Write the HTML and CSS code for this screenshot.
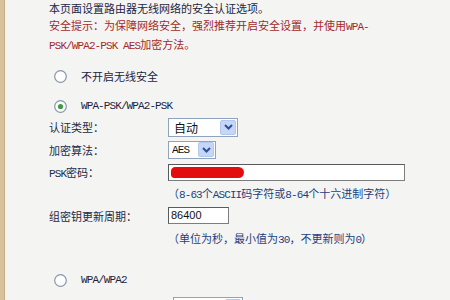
FILE: index.html
```html
<!DOCTYPE html>
<html lang="zh-CN">
<head>
    <meta charset="UTF-8">
    <title>无线网络安全设置</title>
    <link rel="stylesheet" href="styles.css">
</head>
<body>
    <div class="page">
        <div class="intro">
            本页面设置路由器无线网络的安全认证选项。<br>
            <span class="warn">安全提示：为保障网络安全，强烈推荐开启安全设置，并使用<span class="en">WPA-</span><br><span class="en">PSK/WPA2-PSK AES</span>加密方法。</span>
        </div>

        <div class="radio-row first">
            <svg class="radio" width="13" height="13" viewBox="0 0 13 13">
                <circle cx="6.5" cy="6.5" r="5.8" fill="#fff" stroke="#8596ad" stroke-width="1.2"/>
            </svg>
            <span>不开启无线安全</span>
        </div>

        <div class="radio-row second">
            <svg class="radio" width="13" height="13" viewBox="0 0 13 13">
                <circle cx="6.5" cy="6.5" r="5.8" fill="#fff" stroke="#8596ad" stroke-width="1.2"/>
                <circle cx="6.5" cy="6.5" r="2.6" fill="#3f9a45"/>
            </svg>
            <span class="en">WPA-PSK/WPA2-PSK</span>
        </div>

        <div class="row r-auth">
            <div class="label">认证类型：</div>
            <div class="select wide">
                <span class="val">自动</span>
                <span class="arrow"><svg width="9" height="6" viewBox="0 0 9 6"><path d="M1 1 L4.5 4.5 L8 1" fill="none" stroke="#2c4f9a" stroke-width="2"/></svg></span>
            </div>
        </div>
        <div class="row r-enc">
            <div class="label">加密算法：</div>
            <div class="select narrow">
                <span class="val en">AES</span>
                <span class="arrow"><svg width="9" height="6" viewBox="0 0 9 6"><path d="M1 1 L4.5 4.5 L8 1" fill="none" stroke="#2c4f9a" stroke-width="2"/></svg></span>
            </div>
        </div>
        <div class="row r-psk">
            <div class="label"><span class="en">PSK</span>密码：</div>
            <div class="input long"><span class="scribble"></span></div>
        </div>
        <div class="row hint r-hint1">
            <div class="label"></div>
            <div>（<span class="en">8-63</span>个<span class="en">ASCII</span>码字符或<span class="en">8-64</span>个十六进制字符）</div>
        </div>
        <div class="row r-group">
            <div class="label">组密钥更新周期：</div>
            <div class="input short">86400</div>
        </div>
        <div class="row hint r-hint2">
            <div class="label"></div>
            <div>（单位为秒，最小值为<span class="en">30</span>，不更新则为<span class="en">0</span>）</div>
        </div>

        <div class="radio-row third">
            <svg class="radio" width="13" height="13" viewBox="0 0 13 13">
                <circle cx="6.5" cy="6.5" r="5.8" fill="#fff" stroke="#8596ad" stroke-width="1.2"/>
            </svg>
            <span class="en">WPA/WPA2</span>
        </div>

        <div class="row r-auth2">
            <div class="label">认证类型：</div>
            <div class="select wide shift">
                <span class="val">自动</span>
                <span class="arrow"><svg width="9" height="6" viewBox="0 0 9 6"><path d="M1 1 L4.5 4.5 L8 1" fill="none" stroke="#2c4f9a" stroke-width="2"/></svg></span>
            </div>
        </div>
    </div>
</body>
</html>
```

FILE: styles.css
```css
body{
    margin: 0;
    background-color: #f4f4f2;
    font-family: "Noto Sans CJK SC", sans-serif;
    font-size: 11px;
    color: #1c2440;
    overflow: hidden;
}

.page{
    border-left: 4px solid #d8c29e;
    box-shadow: inset 1px 0 0 #c7ad86;
    padding-left: 45px;
    height: 300px;
}

.en{
    font-family: "Liberation Mono", monospace;
    font-size: 11px;
    letter-spacing: -0.9px;
}

.intro{
    line-height: 17px;
    color: #1b2643;
}

.warn{
    color: #a3292a;
}

.radio-row{
    display: flex;
    align-items: center;
    height: 20px;
    padding-left: 5px;
}
.radio-row .radio{
    margin-right: 14px;
}
.radio-row.first{
    margin-top: 11px;
}
.radio-row.second{
    margin-top: 10px;
}
.radio-row.third{
    margin-top: 23px;
}

.row{
    display: flex;
    align-items: center;
}
.label{
    width: 119px;
    flex-shrink: 0;
    color: #232a46;
}
.r-auth{ height: 22px; }
.r-enc{ height: 23px; }
.r-psk{ height: 22px; }
.r-hint1{ height: 20px; }
.r-group{ height: 25px; }
.r-hint2{ height: 19px; }
.r-auth2{ height: 22px; margin-top: 5px; }

.hint{
    color: #1d3f80;
}

.select{
    display: flex;
    align-items: center;
    justify-content: space-between;
    height: 19px;
    box-sizing: border-box;
    border: 1px solid #8fa3bd;
    background-color: #fff;
    padding: 0 1px 0 5px;
    font-size: 12px;
    color: #111;
}
.select.wide{ width: 70px; }
.select.narrow{ width: 48px; height: 18px; padding-left: 3px; }
.select.shift{ margin-left: 5px; }

.arrow{
    display: flex;
    align-items: center;
    justify-content: center;
    width: 16px;
    height: 15px;
    background-color: #c6d6f7;
    border: 1px solid #b4c7ee;
    box-sizing: border-box;
    border-radius: 2px;
}

.input{
    height: 17px;
    box-sizing: border-box;
    border: 1px solid #7d7d7d;
    border-top-color: #5a5a5a;
    border-left-color: #5a5a5a;
    background-color: #fff;
    font-family: "Liberation Sans", sans-serif;
    font-size: 11px;
    color: #111;
    padding: 0 2px;
    line-height: 15px;
}
.input.long{
    width: 237px;
    height: 17px;
    padding: 2px;
}
.input.short{
    width: 61px;
}

.scribble{
    display: block;
    width: 73px;
    height: 11px;
    background-color: #e40d0d;
    border-radius: 6px 8px 8px 5px;
}
```
